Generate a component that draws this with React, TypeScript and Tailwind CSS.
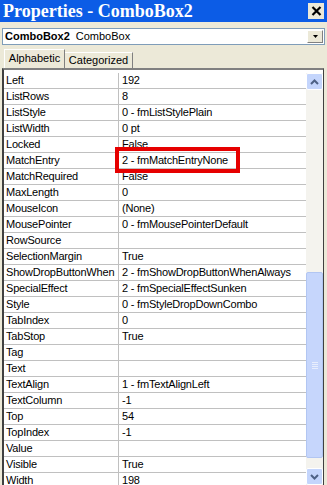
import React from "react";

const rows: [string, string][] = [
  ["Left", "192"],
  ["ListRows", "8"],
  ["ListStyle", "0 - fmListStylePlain"],
  ["ListWidth", "0 pt"],
  ["Locked", "False"],
  ["MatchEntry", "2 - fmMatchEntryNone"],
  ["MatchRequired", "False"],
  ["MaxLength", "0"],
  ["MouseIcon", "(None)"],
  ["MousePointer", "0 - fmMousePointerDefault"],
  ["RowSource", ""],
  ["SelectionMargin", "True"],
  ["ShowDropButtonWhen", "2 - fmShowDropButtonWhenAlways"],
  ["SpecialEffect", "2 - fmSpecialEffectSunken"],
  ["Style", "0 - fmStyleDropDownCombo"],
  ["TabIndex", "0"],
  ["TabStop", "True"],
  ["Tag", ""],
  ["Text", ""],
  ["TextAlign", "1 - fmTextAlignLeft"],
  ["TextColumn", "-1"],
  ["Top", "54"],
  ["TopIndex", "-1"],
  ["Value", ""],
  ["Visible", "True"],
  ["Width", "198"],
];

function Chevron({ up }: { up?: boolean }) {
  return (
    <svg width="9" height="6" viewBox="0 0 9 6">
      <path
        d={up ? "M1 5 L4.5 1.5 L8 5" : "M1 1 L4.5 4.5 L8 1"}
        fill="none"
        stroke="#4d6185"
        strokeWidth="2"
      />
    </svg>
  );
}

export default function App() {
  return (
    <div
      className="w-[327px] h-[485px] bg-[#ece9d8] overflow-hidden flex flex-col text-black"
      style={{ fontFamily: '"Liberation Sans", Arial, sans-serif' }}
    >
      {/* Title bar */}
      <div className="h-[22px] bg-[#0c5ce6] flex items-center justify-between pl-[3px] pr-[3px] shrink-0">
        <span
          className="text-white font-bold text-[18px] leading-none"
          style={{ fontFamily: '"Liberation Serif", serif' }}
        >
          Properties - ComboBox2
        </span>
        <div className="w-[16px] h-[16px] bg-[#ece9d8] flex items-center justify-center">
          <svg width="11" height="10" viewBox="0 0 11 10">
            <path d="M1.5 1 L9.5 9 M9.5 1 L1.5 9" stroke="#000" strokeWidth="2.2" />
          </svg>
        </div>
      </div>

      {/* Object combo */}
      <div className="mt-[6px] mx-[2px] h-[17px] bg-white border border-[#7f9db9] flex items-center shrink-0">
        <div className="flex-1 pl-[2px] text-[11px] leading-none whitespace-nowrap">
          <span className="font-bold">ComboBox2</span>
          <span className="ml-[6px]">ComboBox</span>
        </div>
        <div className="w-[16px] h-[13px] mr-[1px] bg-[#ece9d8] border border-t-white border-l-white border-b-[#808080] border-r-[#808080] flex items-center justify-center">
          <svg width="5" height="3" viewBox="0 0 5 3">
            <path d="M0 0 H5 L2.5 3 Z" fill="#000" />
          </svg>
        </div>
      </div>

      {/* Tabs */}
      <div className="mt-[4px] h-[19px] flex items-end pl-[4px] shrink-0">
        <div className="h-[19px] w-[61px] border border-b-0 border-l-white border-t-white border-r-[#808080] bg-[#ece9d8] text-[11px] flex items-center justify-center pb-[1px]">
          Alphabetic
        </div>
        <div className="h-[16px] w-[68px] border border-l-0 border-b-0 border-t-white border-r-[#808080] text-[11px] flex items-center justify-center">
          Categorized
        </div>
      </div>

      {/* Grid */}
      <div className="relative flex-1 ml-[2px] mr-[3px] border-t-2 border-l-2 border-t-[#808080] border-l-[#404040] border-r border-r-[#404040] bg-white flex pt-[3px] overflow-hidden">
        <div className="flex-1 flex flex-col text-[11px] tracking-[-0.2px]">
          {rows.map(([k, v]) => (
            <div key={k} className="h-[16px] shrink-0 flex border-b border-[#c0c0c0]">
              <div className="w-[115px] pl-[2px] leading-[15px] border-r border-[#c0c0c0] whitespace-nowrap overflow-hidden">
                {k}
              </div>
              <div className="flex-1 pl-[3px] leading-[15px] whitespace-nowrap overflow-hidden">{v}</div>
            </div>
          ))}
        </div>

        {/* Scrollbar */}
        <div className="w-[17px] bg-[#f4f3ee] flex flex-col shrink-0">
          <div className="h-[17px] rounded-[2px] border border-white bg-[#c4d5fc] flex items-center justify-center shrink-0">
            <Chevron up />
          </div>
          <div className="h-[182px] shrink-0" />
          <div className="h-[186px] rounded-[2px] border border-[#b2c6f2] bg-[#c6d6fc] flex items-center justify-center shrink-0">
            <div className="flex flex-col gap-[1px]">
              <div className="w-[6px] h-[1px] bg-[#e8eefd]" />
              <div className="w-[6px] h-[1px] bg-[#e8eefd]" />
              <div className="w-[6px] h-[1px] bg-[#e8eefd]" />
              <div className="w-[6px] h-[1px] bg-[#e8eefd]" />
            </div>
          </div>
          <div className="h-[10px] shrink-0" />
          <div className="h-[17px] rounded-[2px] border border-white bg-[#c4d5fc] flex items-center justify-center shrink-0">
            <Chevron />
          </div>
        </div>

        {/* Highlight box */}
        <div className="absolute left-[111px] top-[77px] w-[125px] h-[26px] border-4 border-[#e60000]" />
      </div>
    </div>
  );
}
